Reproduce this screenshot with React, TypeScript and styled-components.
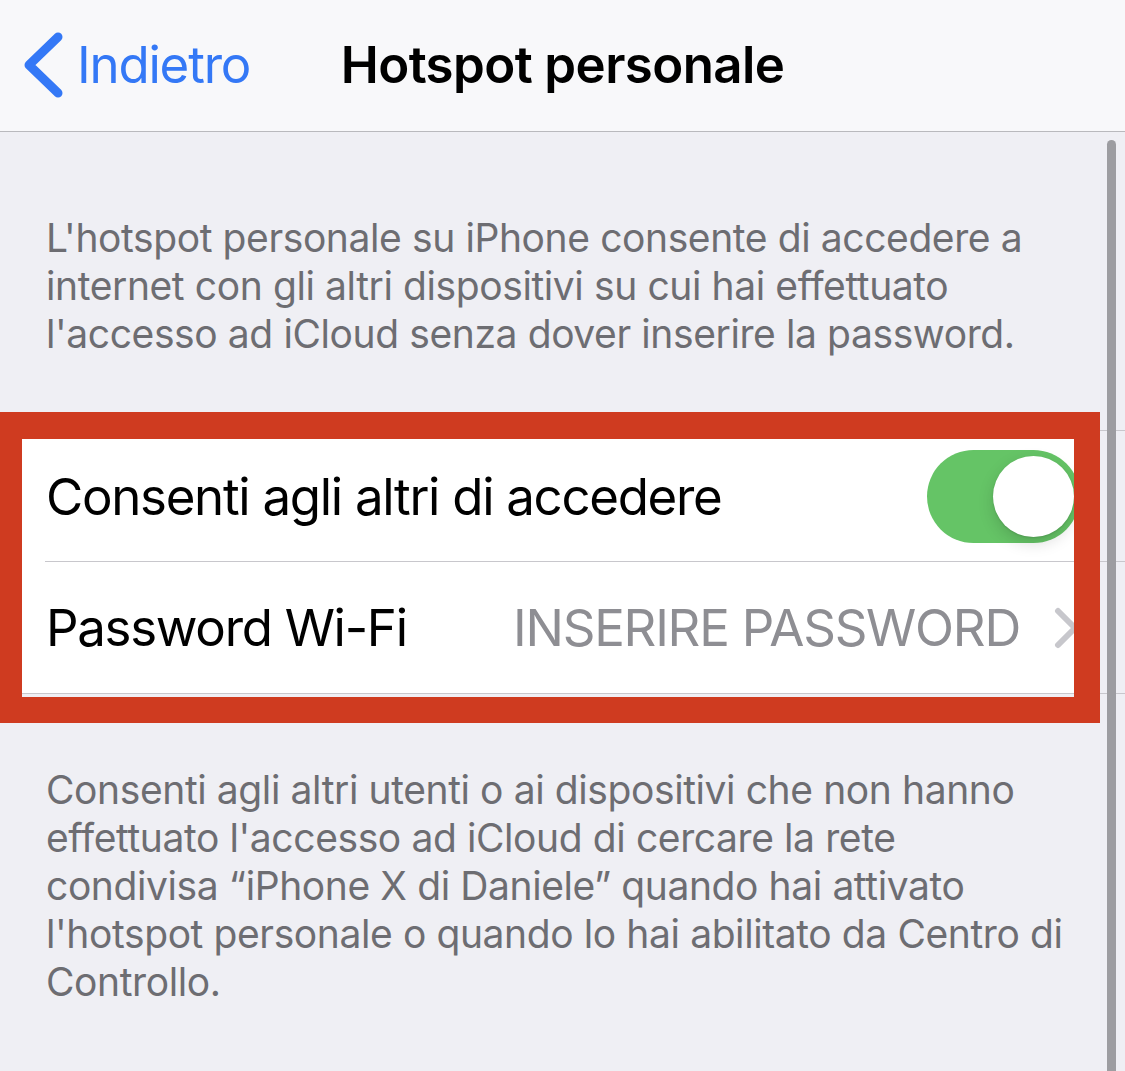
import React from "react";
import styled, { createGlobalStyle } from "styled-components";

const Global = createGlobalStyle`
  html, body { margin: 0; padding: 0; background: #efeff4; }
  body { font-family: Inter, "Noto Sans", sans-serif; -webkit-font-smoothing: antialiased; }
  * { box-sizing: border-box; }
`;

const Screen = styled.div`
  position: relative;
  width: 1125px;
  height: 1071px;
  overflow: hidden;
  background: #efeff4;
`;

const NavBar = styled.header`
  height: 132px;
  background: #f8f8fa;
  border-bottom: 1px solid #b9b9bd;
  display: grid;
  grid-template-columns: 1fr auto 1fr;
  align-items: center;
  padding-bottom: 2px;
`;

const BackButton = styled.div`
  display: flex;
  align-items: center;
  gap: 13px;
  padding-left: 24px;
  color: #3478f6;
  font-size: 51px;
  letter-spacing: -1.2px;
`;

const Title = styled.h1`
  margin: 0;
  font-size: 51px;
  font-weight: 600;
  color: #000;
  letter-spacing: -0.6px;
`;

const Content = styled.main`
  display: flex;
  flex-direction: column;
`;

const Footnote = styled.p<{ $top: number }>`
  margin: ${(p) => p.$top}px 0 0;
  padding: 0 50px 0 46px;
  font-size: 39px;
  line-height: 48px;
  color: #6d6d72;
  letter-spacing: -0.4px;
`;

const Group = styled.section`
  margin-top: 72px;
  border-top: 1px solid #c8c7cc;
  border-bottom: 1px solid #c8c7cc;
  background: linear-gradient(to right, #fff 0, #fff 1100px, transparent 1100px);
`;

const Row = styled.div<{ $divider?: boolean }>`
  height: 131px;
  display: flex;
  align-items: center;
  padding: 0 45px 0 46px;
  position: relative;
  ${(p) =>
    p.$divider &&
    `&::after {
      content: "";
      position: absolute;
      left: 45px;
      right: 0;
      bottom: 0;
      height: 1px;
      background: #c8c7cc;
    }`}
`;

const Label = styled.span`
  flex: 1;
  font-size: 51px;
  color: #000;
  letter-spacing: -1.3px;
`;

const Value = styled.span`
  font-size: 51px;
  color: #8e8e93;
  letter-spacing: -1.25px;
  margin-right: 34px;
`;

const Switch = styled.div<{ $on: boolean }>`
  width: 153px;
  height: 93px;
  border-radius: 47px;
  background: ${(p) => (p.$on ? "#65c466" : "#e9e9ea")};
  display: flex;
  align-items: center;
  justify-content: ${(p) => (p.$on ? "flex-end" : "flex-start")};
  padding: 0 6px;
`;

const Knob = styled.div`
  width: 81px;
  height: 81px;
  border-radius: 50%;
  background: #fff;
  box-shadow: 0 6px 16px rgba(0, 0, 0, 0.15), 0 1px 2px rgba(0, 0, 0, 0.12);
`;

const Annotation = styled.div`
  position: absolute;
  left: 0;
  top: 412px;
  width: 1100px;
  height: 311px;
  border-style: solid;
  border-color: #cf3b20;
  border-width: 27px 26px 26px 22px;
  pointer-events: none;
`;

const ScrollBar = styled.div`
  position: absolute;
  left: 1107px;
  top: 140px;
  width: 9px;
  height: 960px;
  border-radius: 5px;
  background: #9d9da1;
`;

const BackChevron = () => (
  <svg width="40" height="66" viewBox="0 0 40 66">
    <polyline
      points="34,5 5,33 34,61"
      fill="none"
      stroke="#3478f6"
      strokeWidth="9"
      strokeLinecap="round"
      strokeLinejoin="round"
    />
  </svg>
);

const Disclosure = () => (
  <svg width="26" height="42" viewBox="0 0 26 42">
    <polyline
      points="4,4 21,21 4,38"
      fill="none"
      stroke="#c7c7cc"
      strokeWidth="6"
      strokeLinecap="round"
      strokeLinejoin="round"
    />
  </svg>
);

export default function App() {
  return (
    <Screen>
      <Global />
      <NavBar>
        <BackButton>
          <BackChevron />
          Indietro
        </BackButton>
        <Title>Hotspot personale</Title>
        <div />
      </NavBar>
      <Content>
        <Footnote $top={82}>
          L'hotspot personale su iPhone consente di accedere a internet con gli altri dispositivi su cui hai effettuato
          l'accesso ad iCloud senza dover inserire la password.
        </Footnote>
        <Group>
          <Row $divider>
            <Label>Consenti agli altri di accedere</Label>
            <Switch $on>
              <Knob />
            </Switch>
          </Row>
          <Row>
            <Label>Password Wi-Fi</Label>
            <Value>INSERIRE PASSWORD</Value>
            <Disclosure />
          </Row>
        </Group>
        <Footnote $top={72}>
          Consenti agli altri utenti o ai dispositivi che non hanno effettuato l'accesso ad iCloud di cercare la rete
          condivisa “iPhone X di Daniele” quando hai attivato l'hotspot personale o quando lo hai abilitato da Centro di
          Controllo.
        </Footnote>
      </Content>
      <Annotation />
      <ScrollBar />
    </Screen>
  );
}
